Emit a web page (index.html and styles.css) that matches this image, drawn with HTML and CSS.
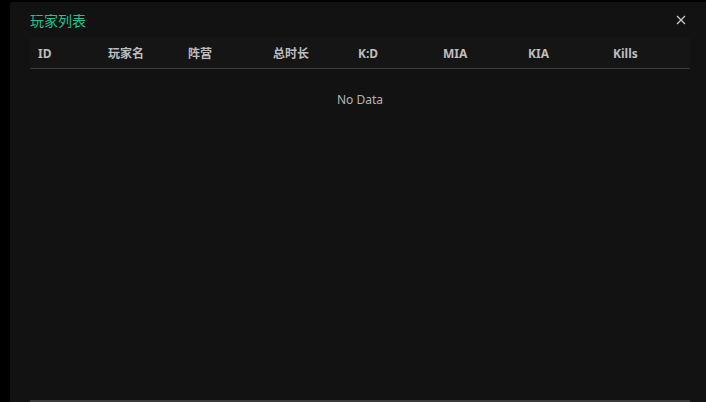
FILE: index.html
```html
<!DOCTYPE html>
<html lang="zh">
<head>
<meta charset="utf-8">
<title>玩家列表</title>
<link rel="stylesheet" href="styles.css">
</head>
<body>
<div class="panel">
  <div class="title-bar">
    <span class="title">玩家列表</span>
    <svg class="close" width="10" height="10" viewBox="0 0 10 10"><path d="M1 1L9 9M9 1L1 9" stroke="#cfcfcf" stroke-width="1.2" fill="none"/></svg>
  </div>
  <div class="table">
    <div class="thead">
      <div class="th c1">ID</div>
      <div class="th c2">玩家名</div>
      <div class="th c3">阵营</div>
      <div class="th c3">总时长</div>
      <div class="th c3">K:D</div>
      <div class="th c3">MIA</div>
      <div class="th c3">KIA</div>
      <div class="th c3">Kills</div>
    </div>
    <div class="empty">No Data</div>
    <div class="spacer"></div>
  </div>
</div>
</body>
</html>
```
FILE: styles.css
```css
html, body {
  margin: 0;
  padding: 0;
  background: #000;
  font-family: "Noto Sans", "Noto Sans CJK SC", sans-serif;
  overflow: hidden;
}
.panel {
  margin: 2px 0 0 10px;
  width: 696px;
  height: 400px;
  box-sizing: border-box;
  background: #121212;
  padding: 0 16px 0 20px;
  display: flex;
  flex-direction: column;
}
.title-bar {
  height: 36px;
  display: flex;
  align-items: center;
  justify-content: space-between;
}
.title {
  color: #22c08f;
  font-size: 14px;
  font-family: "Noto Sans CJK SC", sans-serif;
}
.close {
  margin-right: 4px;
}
.table {
  width: 660px;
  flex: 1;
  display: flex;
  flex-direction: column;
}
.thead {
  display: flex;
  height: 30px;
  background: #151515;
  border-bottom: 1px solid #3a3a3a;
}
.th {
  box-sizing: border-box;
  padding-left: 8px;
  display: flex;
  align-items: center;
  color: #bdbdbd;
  font-size: 12px;
  font-weight: 700;
}
.c1 { width: 70px; }
.c2 { width: 80px; }
.c3 { width: 85px; }
.empty {
  height: 60px;
  display: flex;
  align-items: center;
  justify-content: center;
  color: #b4b4b4;
  font-size: 12px;
}
.spacer {
  flex: 1;
  border-bottom: 2px solid #3a3a3a;
}
```
